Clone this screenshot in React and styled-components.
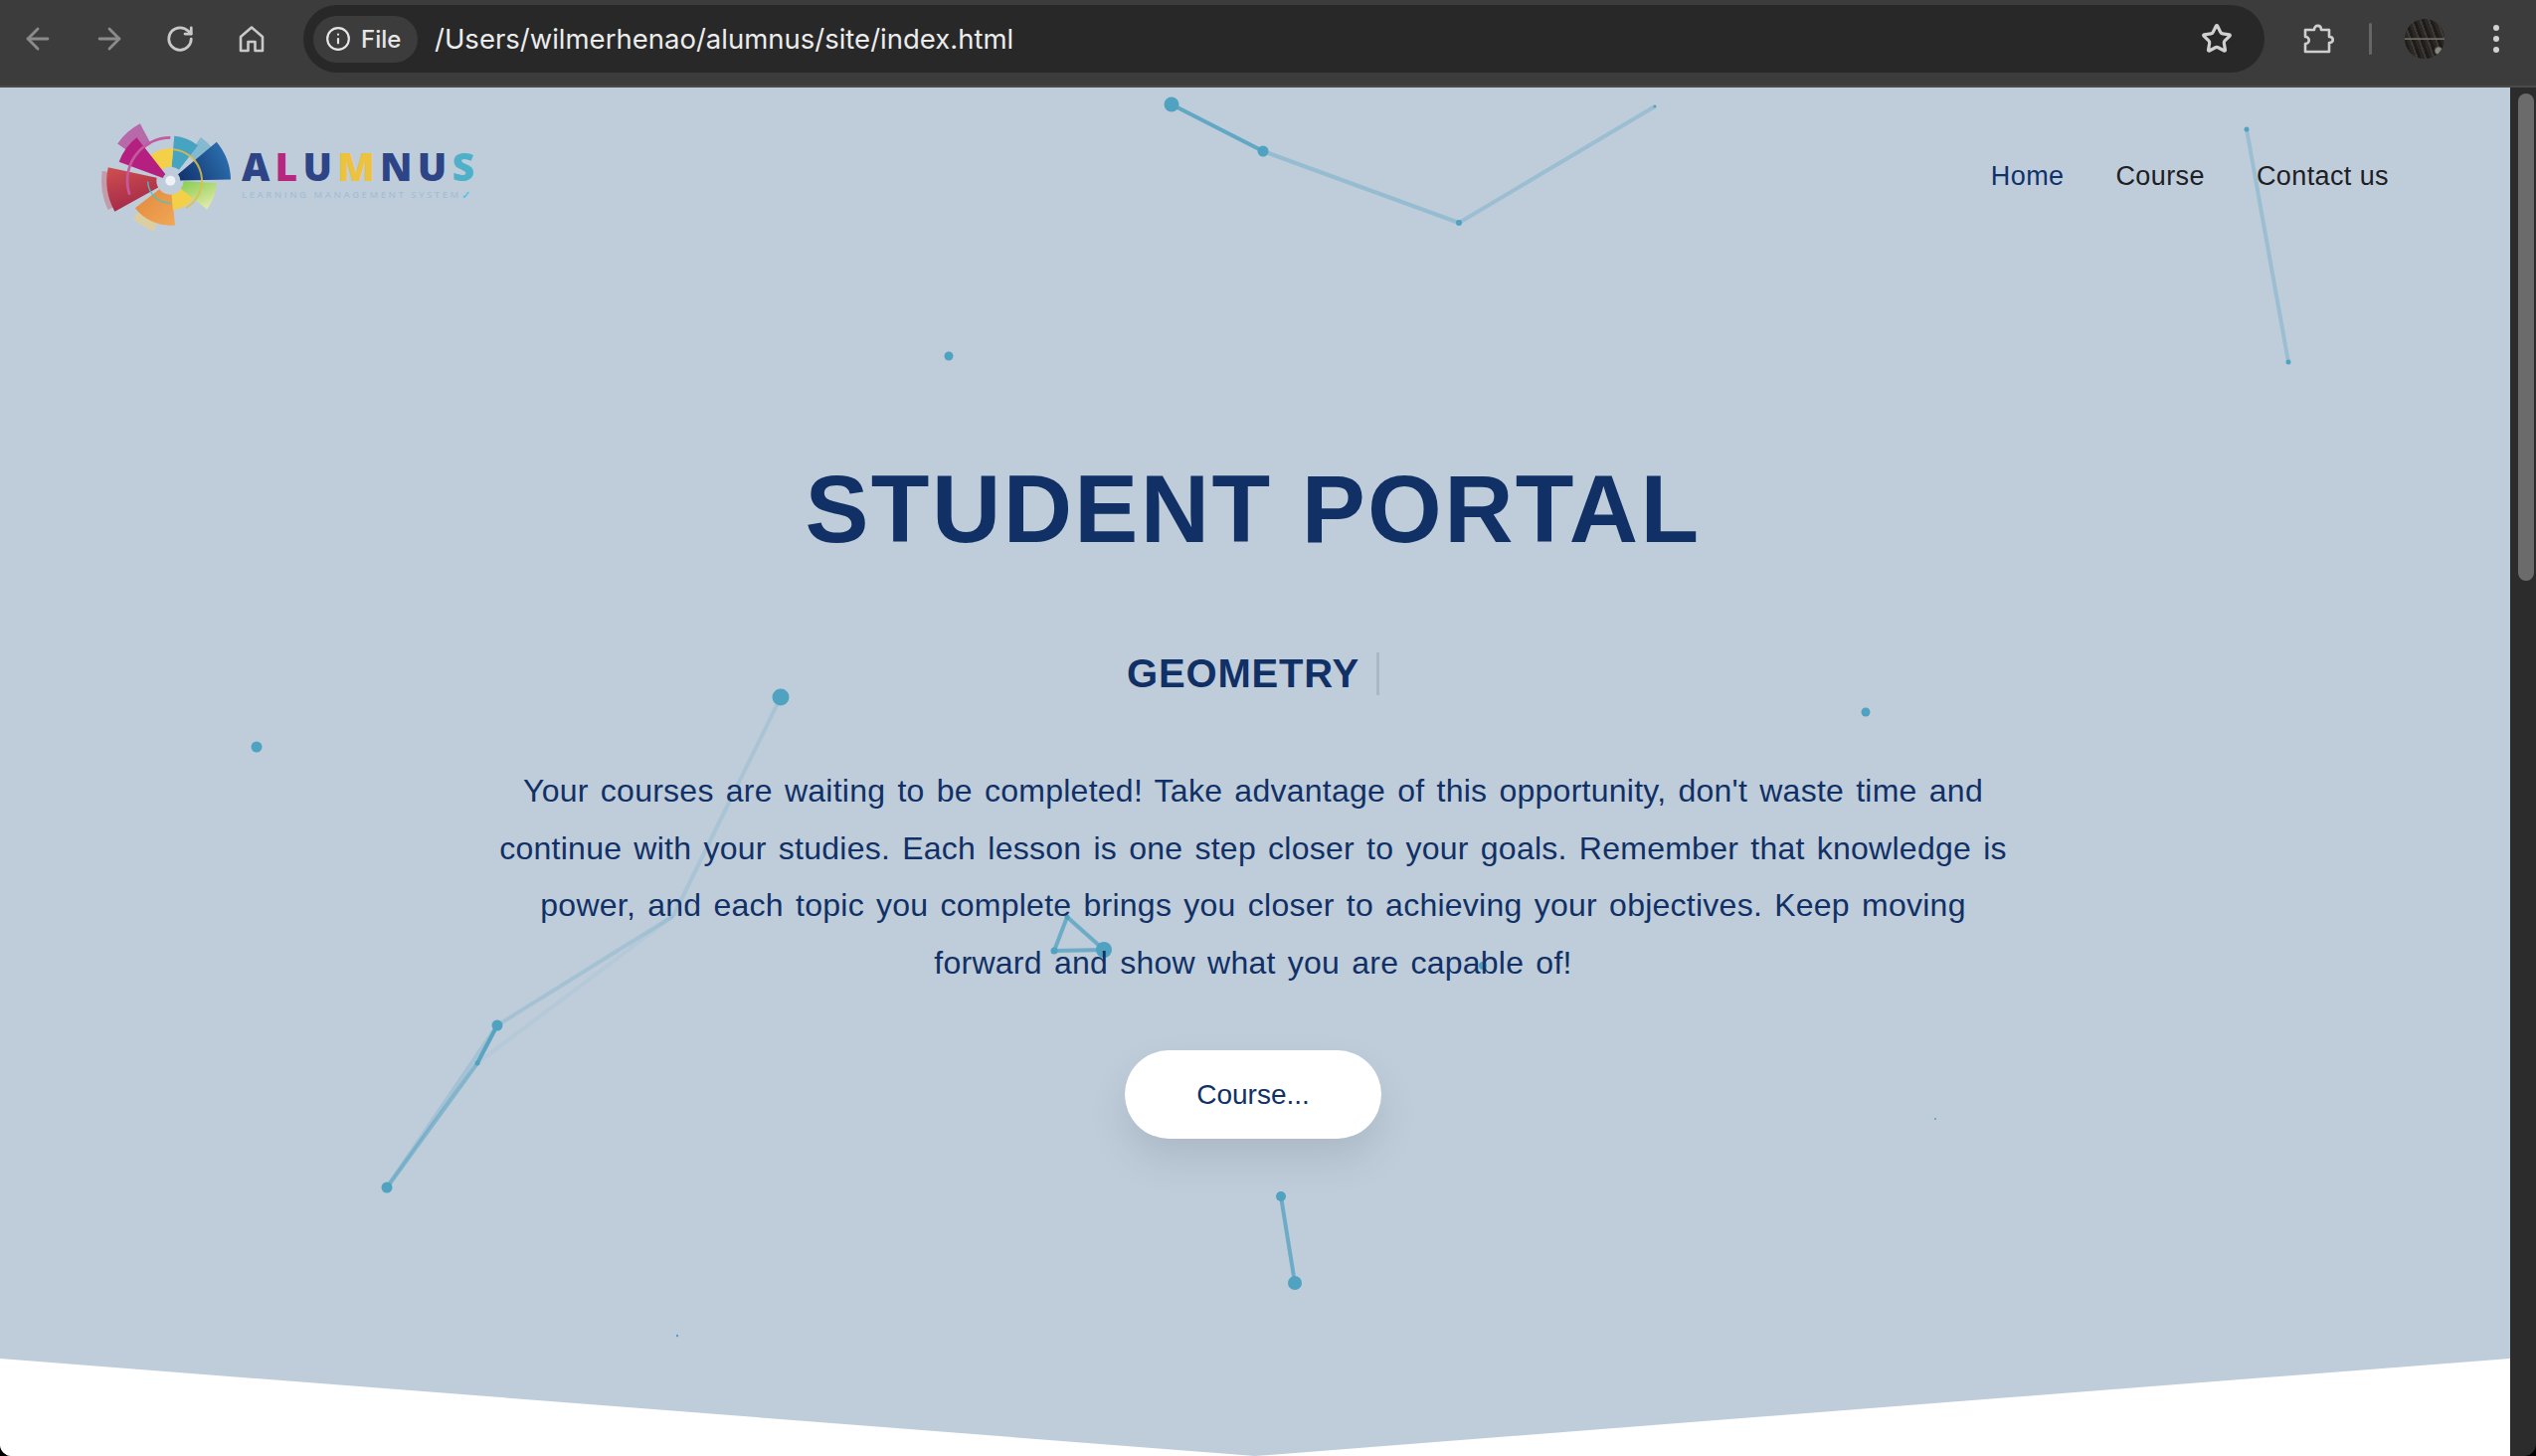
import React from "react";
import styled, { createGlobalStyle } from "styled-components";
import { ArrowLeft, ArrowRight, RotateCw, Star, Info } from "lucide-react";

const GlobalStyle = createGlobalStyle`
    html, body {
        margin: 0;
        padding: 0;
        height: 100%;
        overflow: hidden;
        background: #000;
    }
    * { box-sizing: border-box; }
`;

// particle canvas, coordinates are window coordinates
const dots = [
    [1178, 105, 7.5], [1270, 152, 5.5], [1467, 224, 3], [1664, 107, 1.5],
    [2259, 130, 2.5], [2301, 364, 2.5], [954, 358, 4.5], [258, 751, 5.5], [1876, 716, 4.5],
    [785, 701, 8.5], [500, 1031, 5.5], [480, 1069, 2.5], [389, 1194, 5.5],
    [1073, 922, 2.5], [1110, 955, 8], [1060, 956, 3.5],
    [1491, 971, 4], [1946, 1125, 1], [681, 1343, 1.2],
    [1288, 1203, 5], [1302, 1290, 7],
];

const lines = [
    [1178, 105, 1270, 152, 0.8],
    [1270, 152, 1467, 224, 0.35],
    [1467, 224, 1664, 107, 0.3],
    [2259, 130, 2301, 364, 0.3],
    [785, 701, 677, 921, 0.18],
    [677, 921, 500, 1031, 0.22],
    [677, 921, 480, 1069, 0.08],
    [389, 1194, 480, 1069, 0.5],
    [389, 1194, 500, 1031, 0.22],
    [500, 1031, 480, 1069, 0.85],
    [1073, 922, 1110, 955, 0.7],
    [1110, 955, 1060, 956, 0.7],
    [1060, 956, 1073, 922, 0.7],
    [1288, 1203, 1302, 1290, 0.7],
];

const polar = (a, r) => {
    const t = (a * Math.PI) / 180;
    return `${(229 + r * Math.cos(t)).toFixed(1)} ${(185 + r * Math.sin(t)).toFixed(1)}`;
};

const sector = (a0, a1, r0, r1) =>
    `M${polar(a0, r0)} L${polar(a0, r1)} A${r1} ${r1} 0 0 1 ${polar(a1, r1)} L${polar(a1, r0)} A${r0} ${r0} 0 0 0 ${polar(a0, r0)} Z`;

const arc = (a0, a1, r) => `M${polar(a0, r)} A${r} ${r} 0 0 1 ${polar(a1, r)}`;

const LogoMark = () => (
    <LogoSvg viewBox="0 0 450 345">
        <defs>
            <linearGradient id="blue" x1="0" y1="1" x2="1" y2="0.6">
                <stop offset="0" stopColor="#10316b" />
                <stop offset="1" stopColor="#2b6cab" />
            </linearGradient>
            <linearGradient id="red" x1="0" y1="0" x2="0.3" y2="1">
                <stop offset="0" stopColor="#cf4f50" />
                <stop offset="1" stopColor="#a52a48" />
            </linearGradient>
            <linearGradient id="green" x1="0" y1="0" x2="0.6" y2="1">
                <stop offset="0" stopColor="#86cc4e" />
                <stop offset="1" stopColor="#dfe9a8" />
            </linearGradient>
            <linearGradient id="orange" x1="0" y1="0" x2="1" y2="1">
                <stop offset="0" stopColor="#e3873a" />
                <stop offset="1" stopColor="#f0a857" />
            </linearGradient>
        </defs>
        <path d={sector(-145, -118, 125, 195)} fill="#b4479a" opacity="0.75" />
        <path d={sector(-55, -35, 95, 160)} fill="#4aa8c4" opacity="0.5" />
        <path d={sector(155, 188, 185, 208)} fill="#c8414f" opacity="0.35" />
        <path d={sector(108, 135, 130, 160)} fill="#e9cf8a" opacity="0.7" />
        <path d={sector(-85, -52, 42, 135)} fill="#46a3c2" />
        <path d={sector(-130, -85, 42, 97)} fill="#f4cf48" />
        <path d={sector(-160, -128, 24, 165)} fill="#b41f80" />
        <path d={sector(151, 192, 42, 192)} fill="url(#red)" />
        <path d={sector(84, 142, 42, 135)} fill="url(#orange)" />
        <path d={sector(32, 85, 42, 88)} fill="#f4cf48" />
        <path d={sector(3, 38, 40, 140)} fill="url(#green)" />
        <path d={sector(-40, -1, 30, 182)} fill="url(#blue)" />
        <path d={`M${polar(-90, 130)} A130 130 0 0 0 ${polar(161, 130)}`} fill="none" stroke="#c45aa0" strokeWidth="8" />
        <path d={arc(-85, 60, 95)} fill="none" stroke="#dcc04a" strokeWidth="6" opacity="0.85" />
        <path d={arc(88, 178, 68)} fill="none" stroke="#45c6c4" strokeWidth="4" />
        <circle cx="229" cy="185" r="15" fill="#eef1f5" />
    </LogoSvg>
);

const Particles = () => (
    <Canvas viewBox="0 88 2524 1376">
        {lines.map(([x1, y1, x2, y2, o], i) => (
            <line key={i} x1={x1} y1={y1} x2={x2} y2={y2} stroke="#4a9fbf" strokeWidth="4" opacity={o} />
        ))}
        {dots.map(([cx, cy, r], i) => (
            <circle key={i} cx={cx} cy={cy} r={r} fill="#4fa2c0" />
        ))}
    </Canvas>
);

const App = () => (
    <Window>
        <GlobalStyle />
        <Toolbar>
            <NavIcon $dim><ArrowLeft size={34} strokeWidth={2} /></NavIcon>
            <NavIcon $dim><ArrowRight size={34} strokeWidth={2} /></NavIcon>
            <NavIcon><RotateCw size={30} strokeWidth={2.2} /></NavIcon>
            <NavIcon>
                <svg width="30" height="30" viewBox="0 0 30 30" fill="none" stroke="currentColor" strokeWidth="2.6" strokeLinejoin="round">
                    <path d="M4 13 L15 3.5 L26 13 V27 H18.5 V18 H11.5 V27 H4 Z" />
                </svg>
            </NavIcon>
            <AddressBar>
                <FileChip>
                    <Info size={26} strokeWidth={2} />
                    <span>File</span>
                </FileChip>
                <Url>/Users/wilmerhenao/alumnus/site/index.html</Url>
                <BarStar><Star size={32} strokeWidth={2.4} /></BarStar>
            </AddressBar>
            <Extension>
                <svg width="32" height="32" viewBox="0 0 32 32" fill="none" stroke="currentColor" strokeWidth="2.6" strokeLinejoin="round">
                    <path d="M3 7 H12 C12 1.5 19 1.5 19 7 H27 V14 C32 14 32 20 27 20 V29 H3 V21 C8 21 8 14 3 14 Z" />
                </svg>
            </Extension>
            <Divider />
            <Avatar />
            <Kebab><i /><i /><i /></Kebab>
        </Toolbar>
        <Viewport>
            <Main>
                <Particles />
                <Header>
                    <Logo>
                        <LogoMark />
                        <LogoText>
                            <Wordmark>
                                <Letter $c="#2d4586">A</Letter>
                                <Letter $c="#b8277f">L</Letter>
                                <Letter $c="#2d4586">U</Letter>
                                <Letter $c="#edc23f">M</Letter>
                                <Letter $c="#2d4586">N</Letter>
                                <Letter $c="#2d4586">U</Letter>
                                <Letter $c="#4fb0c9">S</Letter>
                            </Wordmark>
                            <Tagline>LEARNING MANAGEMENT SYSTEM<Tick>✓</Tick></Tagline>
                        </LogoText>
                    </Logo>
                    <Menu>
                        <MenuLink $active>Home</MenuLink>
                        <MenuLink>Course</MenuLink>
                        <MenuLink>Contact us</MenuLink>
                    </Menu>
                </Header>
                <Hero>
                    <Title>STUDENT PORTAL</Title>
                    <Subtitle>GEOMETRY<Caret /></Subtitle>
                    <Lead>
                        Your courses are waiting to be completed! Take advantage of this opportunity, don't waste
                        time and continue with your studies. Each lesson is one step closer to your goals. Remember
                        that knowledge is power, and each topic you complete brings you closer to achieving your
                        objectives. Keep moving forward and show what you are capable of!
                    </Lead>
                    <CourseButton>Course...</CourseButton>
                </Hero>
                <Wedge />
            </Main>
            <Scrollbar><Thumb /></Scrollbar>
        </Viewport>
    </Window>
);

const Window = styled.div`
    width: 2550px;
    height: 1464px;
    display: flex;
    flex-direction: column;
    overflow: hidden;
    border-radius: 0 0 12px 12px;
    font-family: "Liberation Sans", Arial, sans-serif;
`;

const Toolbar = styled.div`
    height: 88px;
    flex: none;
    display: flex;
    align-items: center;
    padding: 0 0 8px 21px;
    background: #3c3c3c;
    border-bottom: 2px solid #4a4a4a;
`;

const NavIcon = styled.div`
    width: 34px;
    height: 34px;
    margin-right: 37.5px;
    display: flex;
    align-items: center;
    justify-content: center;
    color: ${(p) => (p.$dim ? "#8b8b8b" : "#c9c9c9")};
`;

const AddressBar = styled.div`
    width: 1972px;
    height: 68px;
    margin-left: -2px;
    display: flex;
    align-items: center;
    padding-left: 10px;
    border-radius: 34px;
    background: #282828;
`;

const FileChip = styled.div`
    height: 47px;
    width: 105px;
    display: flex;
    align-items: center;
    gap: 10px;
    padding-left: 12px;
    border-radius: 24px;
    background: #3c3c3c;
    color: #e6e6e6;
    font: 500 24px "Inter", sans-serif;
`;

const Url = styled.div`
    margin-left: 17px;
    color: #ececec;
    font: 400 27.5px "Inter", sans-serif;
`;

const BarStar = styled.div`
    margin-left: auto;
    margin-right: 32px;
    display: flex;
    color: #d0d0d0;
`;

const Extension = styled.div`
    margin-left: 38px;
    display: flex;
    color: #cfcfcf;
`;

const Divider = styled.div`
    width: 3px;
    height: 32px;
    margin-left: 35px;
    border-radius: 2px;
    background: #666;
`;

const Avatar = styled.div`
    width: 40px;
    height: 40px;
    margin-left: 33px;
    border-radius: 50%;
    background:
        linear-gradient(#0000 48%, #6d6a62 49%, #6d6a62 52%, #0000 53%),
        radial-gradient(circle at 85% 80%, #8a8880 0 6%, #0000 10%),
        repeating-linear-gradient(70deg, #2a2724 0 3px, #3c3833 3px 5px, #1e1c1a 5px 8px);
`;

const Kebab = styled.div`
    margin-left: 49px;
    display: flex;
    flex-direction: column;
    gap: 5px;
    i {
        width: 6px;
        height: 6px;
        border-radius: 50%;
        background: #d2d2d2;
    }
`;

const Viewport = styled.div`
    flex: 1;
    min-height: 0;
    display: flex;
`;

const Main = styled.div`
    position: relative;
    flex: 1;
    display: flex;
    flex-direction: column;
    background: #bfcddb;
`;

const Canvas = styled.svg`
    position: absolute;
    inset: 0;
    width: 100%;
    height: 100%;
    z-index: 0;
`;

const Header = styled.header`
    position: relative;
    z-index: 1;
    display: flex;
    justify-content: space-between;
    padding: 32px 122px 0 95px;
`;

const Logo = styled.div`
    display: flex;
    align-items: flex-start;
`;

const LogoSvg = styled.svg`
    width: 150px;
    height: 115px;
`;

const LogoText = styled.div`
    margin: 24px 0 0 -2px;
`;

const Wordmark = styled.div`
    display: flex;
    font: 800 39px/46px "Open Sans", sans-serif;
    letter-spacing: 5.2px;
`;

const Letter = styled.span`
    color: ${(p) => p.$c};
`;

const Tagline = styled.div`
    display: flex;
    align-items: center;
    font: 600 9.5px/12px "Open Sans", sans-serif;
    letter-spacing: 2.5px;
    color: #a6bed3;
`;

const Tick = styled.span`
    color: #5cc0e8;
    font-size: 11px;
    letter-spacing: 0;
`;

const Menu = styled.nav`
    display: flex;
    gap: 52px;
    padding-top: 41px;
`;

const MenuLink = styled.a`
    font-size: 27px;
    line-height: 32px;
    letter-spacing: 0.4px;
    color: ${(p) => (p.$active ? "#10326b" : "#1d2024")};
`;

const Hero = styled.section`
    position: relative;
    z-index: 1;
    display: flex;
    flex-direction: column;
    align-items: center;
    margin-top: 219px;
    padding-right: 4px;
`;

const Title = styled.h1`
    margin: 0;
    font-size: 96px;
    line-height: 115px;
    font-weight: 700;
    letter-spacing: 2.4px;
    color: #113166;
`;

const Subtitle = styled.h2`
    display: flex;
    align-items: center;
    margin: 82px 0 0;
    font-size: 40px;
    line-height: 52px;
    font-weight: 700;
    letter-spacing: 0.8px;
    color: #113166;
`;

const Caret = styled.span`
    width: 3px;
    height: 43px;
    margin-left: 17px;
    background: #a9b8c2;
`;

const Lead = styled.p`
    width: 1530px;
    margin: 64px 0 0;
    text-align: center;
    font-size: 32px;
    line-height: 57.5px;
    letter-spacing: 0.25px;
    word-spacing: 3px;
    color: #113166;
`;

const CourseButton = styled.button`
    width: 258px;
    height: 89px;
    margin-top: 59px;
    border: 0;
    border-radius: 45px;
    background: #fff;
    color: #113166;
    font-family: inherit;
    font-size: 28px;
    box-shadow: 0 20px 40px rgba(0, 0, 0, 0.1);
`;

const Wedge = styled.div`
    position: relative;
    z-index: 1;
    margin-top: auto;
    height: 98px;
    background: #fff;
    clip-path: polygon(0 0, 50% 100%, 100% 0, 100% 100%, 0 100%);
`;

const Scrollbar = styled.div`
    width: 26px;
    flex: none;
    padding: 6px 2px 0 8px;
    background: #2c2c2c;
`;

const Thumb = styled.div`
    height: 490px;
    border-radius: 8px;
    background: #6b6b6b;
`;

export default App;
